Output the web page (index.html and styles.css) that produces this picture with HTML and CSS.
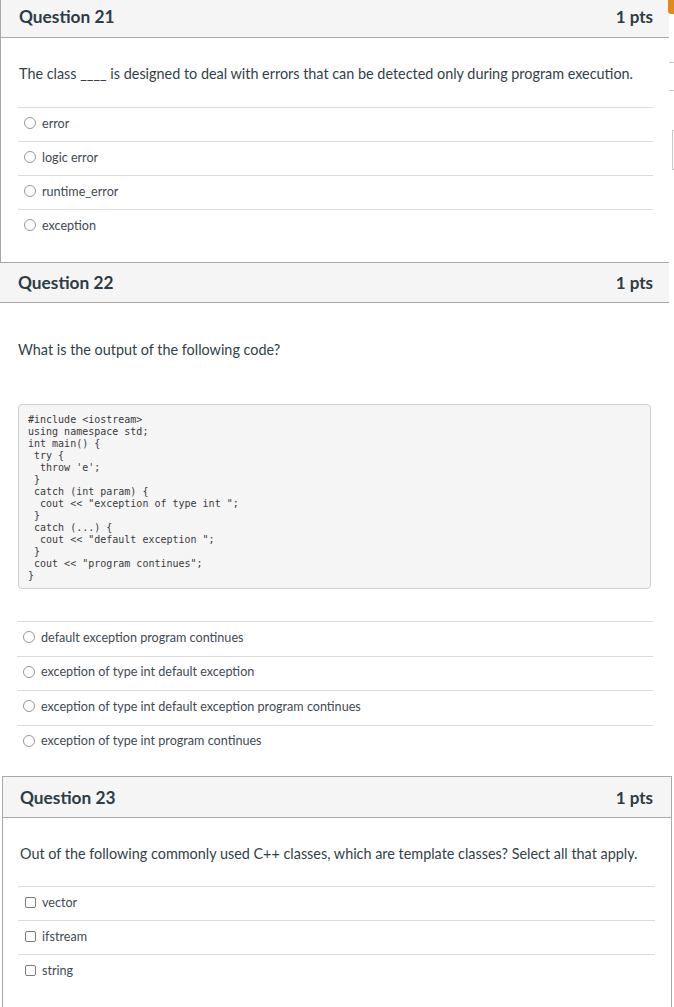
FILE: index.html
```html
<!DOCTYPE html>
<html>
<head>
<meta charset="utf-8">
<link rel="stylesheet" href="styles.css">
</head>
<body>
<div class="page">
  <section class="q q21">
    <header class="q-head"><h2 class="q-title">Question 21</h2><span class="pts">1 pts</span></header>
    <div class="q-body">
      <p class="q-text">The class ____ is designed to deal with errors that can be detected only during program execution.</p>
      <ul class="answers">
        <li><span class="radio"></span>error</li>
        <li><span class="radio"></span>logic error</li>
        <li><span class="radio"></span>runtime_error</li>
        <li><span class="radio"></span>exception</li>
      </ul>
    </div>
  </section>

  <section class="q q22">
    <header class="q-head"><h2 class="q-title">Question 22</h2><span class="pts">1 pts</span></header>
    <div class="q-body">
      <p class="q-text">What is the output of the following code?</p>
<pre class="code">#include &lt;iostream&gt;
using namespace std;
int main() {
 try {
  throw 'e';
 }
 catch (int param) {
  cout &lt;&lt; "exception of type int ";
 }
 catch (...) {
  cout &lt;&lt; "default exception ";
 }
 cout &lt;&lt; "program continues";
}</pre>
      <ul class="answers">
        <li><span class="radio"></span>default exception program continues</li>
        <li><span class="radio"></span>exception of type int default exception</li>
        <li><span class="radio"></span>exception of type int default exception program continues</li>
        <li><span class="radio"></span>exception of type int program continues</li>
      </ul>
    </div>
  </section>

  <section class="q q23">
    <header class="q-head"><h2 class="q-title">Question 23</h2><span class="pts">1 pts</span></header>
    <div class="q-body">
      <p class="q-text">Out of the following commonly used C++ classes, which are template classes? Select all that apply.</p>
      <ul class="answers">
        <li><span class="check"></span>vector</li>
        <li><span class="check"></span>ifstream</li>
        <li><span class="check"></span>string</li>
      </ul>
    </div>
  </section>

  <div class="edge-mark"></div>
  <div class="edge-line e1"></div>
  <div class="edge-line e2"></div>
  <div class="edge-box"></div>
</div>
</body>
</html>
```

FILE: styles.css
```css
html, body {
  margin: 0;
  padding: 0;
  background: #fff;
}
body {
  font-family: Lato, "Open Sans", "Liberation Sans", sans-serif;
  color: #2d3b45;
}
.page {
  position: relative;
  width: 674px;
  height: 1007px;
  overflow: hidden;
}
.q {
  box-sizing: border-box;
}
.q21 {
  width: 669px;
  height: 262px;
  border-left: 1px solid #a9a9a9;
}
.q22 {
  width: 669px;
  height: 514px;
}
.q23 {
  width: 670px;
  margin-left: 2px;
  border: 1px solid #a9a9a9;
  border-bottom: none;
  height: 231px;
}
.q-head {
  display: flex;
  align-items: center;
  justify-content: space-between;
  background: #f5f5f5;
  border-bottom: 1px solid #a9a9a9;
  padding: 0 16px 0 18px;
  box-sizing: border-box;
}
.q21 .q-head {
  height: 38px;
  padding-bottom: 4px;
}
.q22 .q-head {
  height: 41px;
  border-top: 1px solid #a9a9a9;
}
.q23 .q-head {
  height: 41px;
  padding-left: 17px;
  padding-right: 18px;
}
.q-title {
  margin: 0;
  font-size: 17.3px;
  font-weight: 700;
  color: #2d3b45;
}
.pts {
  font-size: 17px;
  font-weight: 700;
  color: #2d3b45;
}
.q-body {
  padding: 0 16px 0 17px;
}
.q23 .q-body {
  padding-left: 15px;
  padding-right: 16px;
}
.q-text {
  margin: 0;
  font-size: 14.4px;
  line-height: 20px;
  color: #323f48;
}
.q21 .q-text { margin-top: 26px; padding-left: 1px; }
.q22 .q-text { margin-top: 37px; padding-left: 1px; }
.q23 .q-text { margin-top: 26px; padding-left: 2px; }

.answers {
  list-style: none;
  margin: 0;
  padding: 0;
}
.q21 .answers { margin-top: 23px; }
.q22 .answers { margin-top: 32px; }
.q23 .answers { margin-top: 22px; }
.answers li {
  display: flex;
  align-items: center;
  gap: 6px;
  height: 34px;
  border-top: 1px solid #dcdcdc;
  box-sizing: border-box;
  padding-left: 7px;
  padding-bottom: 3px;
  font-size: 12.6px;
  color: #3f4a53;
}
.q21 .answers li { padding-left: 6px; }
.q22 .answers li { padding-left: 6px; height: 34.5px; }
.radio {
  width: 10px;
  height: 10px;
  border: 1px solid #979797;
  border-radius: 50%;
  flex: none;
}
.check {
  width: 9px;
  height: 9px;
  border: 1px solid #7a7a7a;
  border-radius: 2px;
  flex: none;
}
.code {
  margin: 44px 0 0 1px;
  box-sizing: border-box;
  width: 633px;
  height: 185px;
  background: #f5f5f5;
  border: 1px solid #cfcfcf;
  border-radius: 4px;
  padding: 9px 8px 0 9px;
  font-family: "DejaVu Sans Mono", "Liberation Mono", monospace;
  font-size: 10px;
  line-height: 12px;
  color: #3a3a3a;
  white-space: pre;
}

/* fragments of neighbouring UI that overlap the right edge of the capture */
.edge-mark {
  position: absolute;
  left: 668px;
  top: 0;
  width: 6px;
  height: 14px;
  background: #e08a1e;
  border-radius: 0 0 0 3px;
}
.edge-line {
  position: absolute;
  left: 669px;
  width: 5px;
  height: 1px;
  background: #c8c8c8;
}
.e1 { top: 62px; }
.e2 { top: 90px; }
.edge-box {
  position: absolute;
  left: 672px;
  top: 130px;
  width: 4px;
  height: 40px;
  border: 1px solid #c8c8c8;
  box-sizing: border-box;
}
```
